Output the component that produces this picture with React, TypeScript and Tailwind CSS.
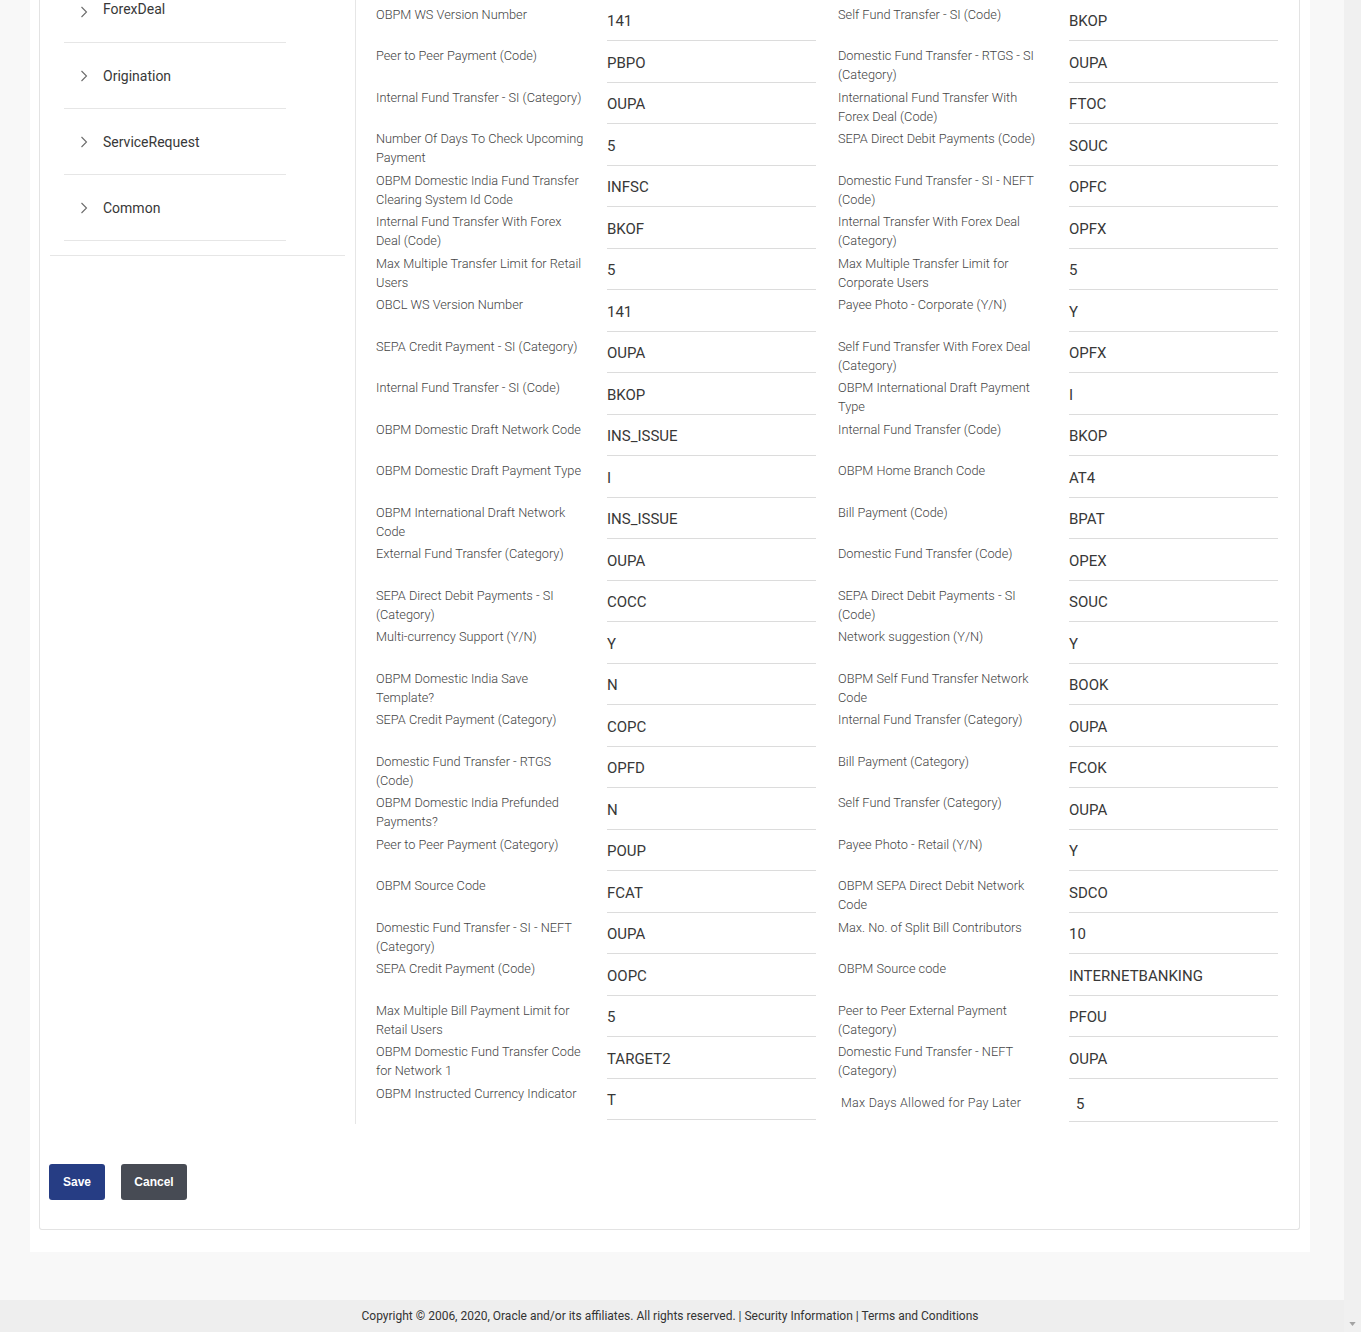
type Field = { label: string; value: string }

const leftFields: Field[] = [
  { label: "OBPM WS Version Number", value: "141" },
  { label: "Peer to Peer Payment (Code)", value: "PBPO" },
  { label: "Internal Fund Transfer - SI (Category)", value: "OUPA" },
  { label: "Number Of Days To Check Upcoming\nPayment", value: "5" },
  { label: "OBPM Domestic India Fund Transfer\nClearing System Id Code", value: "INFSC" },
  { label: "Internal Fund Transfer With Forex\nDeal (Code)", value: "BKOF" },
  { label: "Max Multiple Transfer Limit for Retail\nUsers", value: "5" },
  { label: "OBCL WS Version Number", value: "141" },
  { label: "SEPA Credit Payment - SI (Category)", value: "OUPA" },
  { label: "Internal Fund Transfer - SI (Code)", value: "BKOP" },
  { label: "OBPM Domestic Draft Network Code", value: "INS_ISSUE" },
  { label: "OBPM Domestic Draft Payment Type", value: "I" },
  { label: "OBPM International Draft Network\nCode", value: "INS_ISSUE" },
  { label: "External Fund Transfer (Category)", value: "OUPA" },
  { label: "SEPA Direct Debit Payments - SI\n(Category)", value: "COCC" },
  { label: "Multi-currency Support (Y/N)", value: "Y" },
  { label: "OBPM Domestic India Save\nTemplate?", value: "N" },
  { label: "SEPA Credit Payment (Category)", value: "COPC" },
  { label: "Domestic Fund Transfer - RTGS\n(Code)", value: "OPFD" },
  { label: "OBPM Domestic India Prefunded\nPayments?", value: "N" },
  { label: "Peer to Peer Payment (Category)", value: "POUP" },
  { label: "OBPM Source Code", value: "FCAT" },
  { label: "Domestic Fund Transfer - SI - NEFT\n(Category)", value: "OUPA" },
  { label: "SEPA Credit Payment (Code)", value: "OOPC" },
  { label: "Max Multiple Bill Payment Limit for\nRetail Users", value: "5" },
  { label: "OBPM Domestic Fund Transfer Code\nfor Network 1", value: "TARGET2" },
  { label: "OBPM Instructed Currency Indicator", value: "T" },
]

const rightFields: Field[] = [
  { label: "Self Fund Transfer - SI (Code)", value: "BKOP" },
  { label: "Domestic Fund Transfer - RTGS - SI\n(Category)", value: "OUPA" },
  { label: "International Fund Transfer With\nForex Deal (Code)", value: "FTOC" },
  { label: "SEPA Direct Debit Payments (Code)", value: "SOUC" },
  { label: "Domestic Fund Transfer - SI - NEFT\n(Code)", value: "OPFC" },
  { label: "Internal Transfer With Forex Deal\n(Category)", value: "OPFX" },
  { label: "Max Multiple Transfer Limit for\nCorporate Users", value: "5" },
  { label: "Payee Photo - Corporate (Y/N)", value: "Y" },
  { label: "Self Fund Transfer With Forex Deal\n(Category)", value: "OPFX" },
  { label: "OBPM International Draft Payment\nType", value: "I" },
  { label: "Internal Fund Transfer (Code)", value: "BKOP" },
  { label: "OBPM Home Branch Code", value: "AT4" },
  { label: "Bill Payment (Code)", value: "BPAT" },
  { label: "Domestic Fund Transfer (Code)", value: "OPEX" },
  { label: "SEPA Direct Debit Payments - SI\n(Code)", value: "SOUC" },
  { label: "Network suggestion (Y/N)", value: "Y" },
  { label: "OBPM Self Fund Transfer Network\nCode", value: "BOOK" },
  { label: "Internal Fund Transfer (Category)", value: "OUPA" },
  { label: "Bill Payment (Category)", value: "FCOK" },
  { label: "Self Fund Transfer (Category)", value: "OUPA" },
  { label: "Payee Photo - Retail (Y/N)", value: "Y" },
  { label: "OBPM SEPA Direct Debit Network\nCode", value: "SDCO" },
  { label: "Max. No. of Split Bill Contributors", value: "10" },
  { label: "OBPM Source code", value: "INTERNETBANKING" },
  { label: "Peer to Peer External Payment\n(Category)", value: "PFOU" },
  { label: "Domestic Fund Transfer - NEFT\n(Category)", value: "OUPA" },
]

const menu = ["ForexDeal", "Origination", "ServiceRequest", "Common"]

function Chevron({ className = "" }: { className?: string }) {
  return (
    <svg viewBox="0 0 8 12" className={`h-[12px] w-[8px] shrink-0 ${className}`} fill="none">
      <polyline points="1.5,1 6.5,6 1.5,11" stroke="#6b6b6b" strokeWidth="1.1" />
    </svg>
  )
}

function FieldRow({ label, value }: Field) {
  return (
    <div className="flex h-[41.5px]">
      <div className="w-[231px] shrink-0 whitespace-pre-line pt-[4.5px] text-[12.75px] leading-[19px] font-light text-[#444]">
        {label}
      </div>
      <div className="h-[41px] w-[209px] border-b border-[#dcdcdc] pt-[11px] text-[15px] leading-[20px] text-[#383838]">
        {value}
      </div>
    </div>
  )
}

export default function App() {
  return (
    <div className="flex w-[1361px] bg-[#f8f8f8] font-['Roboto','Liberation_Sans',sans-serif]">
      <div className="flex w-[1344px] flex-col">
        <div className="ml-[30px] w-[1280px] bg-white pb-[22px]">
          <div className="ml-[9px] w-[1261px] rounded-b-[3px] border-x border-b border-[#e3e3e3] pb-[29px]">
            <div className="flex">
              {/* sidebar */}
              <div className="w-[316px] shrink-0 border-r border-[#e6e6e6] pl-[10px] pr-[10px]">
                <div className="border-b border-[#e6e6e6] pb-[14px]">
                  <ul className="ml-[14px] w-[222px]">
                    {menu.map((item, i) =>
                      i === 0 ? (
                        <li key={item} className="flex h-[43px] items-start border-b border-[#e6e6e6] pl-[16px]">
                          <Chevron className="mt-[6px]" />
                          <span className="ml-[15px] text-[14px] leading-[18px] text-[#383838]">{item}</span>
                        </li>
                      ) : (
                        <li key={item} className="flex h-[66px] items-center border-b border-[#e6e6e6] pl-[16px]">
                          <Chevron />
                          <span className="ml-[15px] text-[14px] leading-[20px] text-[#383838]">{item}</span>
                        </li>
                      )
                    )}
                  </ul>
                </div>
              </div>

              {/* fields */}
              <div className="flex gap-[22px] pb-[2px] pl-[20px]">
                <div className="flex flex-col">
                  {leftFields.map((f) => (
                    <FieldRow key={f.label} {...f} />
                  ))}
                </div>
                <div className="flex flex-col">
                  {rightFields.map((f) => (
                    <FieldRow key={f.label} {...f} />
                  ))}
                  <div className="flex h-[43px]">
                    <div className="w-[231px] shrink-0 pl-[3px] pt-[14px] text-[12.5px] leading-[19px] font-light tracking-[0.25px] text-[#444]">
                      Max Days Allowed for Pay Later
                    </div>
                    <div className="h-[43px] w-[209px] border-b border-[#dcdcdc] pl-[7px] pt-[15px] text-[15px] leading-[20px] text-[#383838]">
                      5
                    </div>
                  </div>
                </div>
              </div>
            </div>

            <div className="mt-[40px] flex gap-[16px] pl-[9px] font-['Liberation_Sans',sans-serif]">
              <button className="h-[36px] w-[56px] rounded-[3px] bg-[#263d84] text-[12px] font-bold text-white">
                Save
              </button>
              <button className="h-[36px] w-[66px] rounded-[3px] bg-[#474b54] text-[12px] font-bold text-white">
                Cancel
              </button>
            </div>
          </div>
        </div>

        <div className="h-[48px]" />

        <footer className="flex h-[32px] items-center justify-center bg-[#eeeeee] pr-[4px] text-[12px] text-[#333]">
          Copyright © 2006, 2020, Oracle and/or its affiliates. All rights reserved. | Security Information | Terms and
          Conditions
        </footer>
      </div>

      {/* scrollbar */}
      <div className="flex h-[1332px] w-[17px] flex-col justify-end bg-[#f0f0f0] pb-[6px]">
        <svg viewBox="0 0 8 5" className="mx-auto h-[4px] w-[7px]">
          <polygon points="0,0 8,0 4,5" fill="#a3a3a3" />
        </svg>
      </div>
    </div>
  )
}
